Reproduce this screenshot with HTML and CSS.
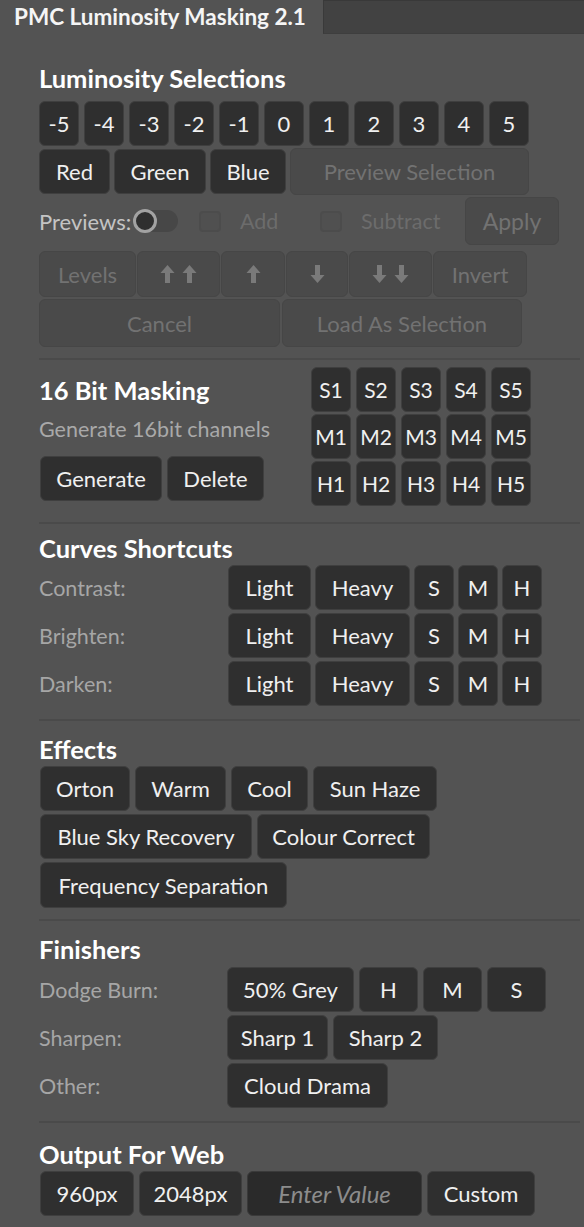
FILE: index.html
```html
<!DOCTYPE html>
<html lang="en">
<head>
<meta charset="utf-8">
<title>PMC Luminosity Masking 2.1</title>
<link rel="stylesheet" href="styles.css">
</head>
<body>
<div class="tabbar">
  <div class="tab">PMC Luminosity Masking 2.1</div>
  <div class="tab-rest"></div>
</div>
<main class="panel">
  <section class="sec sec-lum">
    <h2>Luminosity Selections</h2>
    <div class="row r1">
      <div class="btn sq">-5</div><div class="btn sq">-4</div><div class="btn sq">-3</div><div class="btn sq">-2</div><div class="btn sq">-1</div><div class="btn sq">0</div><div class="btn sq">1</div><div class="btn sq">2</div><div class="btn sq">3</div><div class="btn sq">4</div><div class="btn sq">5</div>
    </div>
    <div class="row r2">
      <div class="btn w-red">Red</div><div class="btn w-green">Green</div><div class="btn w-blue">Blue</div><div class="btn dis w-prev">Preview Selection</div>
    </div>
    <div class="row previews">
      <span class="prev-label">Previews:</span>
      <span class="toggle"><span class="knob"></span></span>
      <span class="check c-add"></span><span class="dis-text t-add">Add</span>
      <span class="check c-sub"></span><span class="dis-text t-sub">Subtract</span>
      <div class="btn dis apply">Apply</div>
    </div>
    <div class="row levels">
      <div class="btn dis">Levels</div>
      <div class="btn dis"><svg class="arr" viewBox="0 0 14 18"><path d="M7 0 L14 8 L9.5 8 L9.5 18 L4.5 18 L4.5 8 L0 8 Z"/></svg><svg class="arr" viewBox="0 0 14 18"><path d="M7 0 L14 8 L9.5 8 L9.5 18 L4.5 18 L4.5 8 L0 8 Z"/></svg></div>
      <div class="btn dis"><svg class="arr" viewBox="0 0 14 18"><path d="M7 0 L14 8 L9.5 8 L9.5 18 L4.5 18 L4.5 8 L0 8 Z"/></svg></div>
      <div class="btn dis"><svg class="arr" viewBox="0 0 14 18"><path d="M7 18 L14 10 L9.5 10 L9.5 0 L4.5 0 L4.5 10 L0 10 Z"/></svg></div>
      <div class="btn dis"><svg class="arr" viewBox="0 0 14 18"><path d="M7 18 L14 10 L9.5 10 L9.5 0 L4.5 0 L4.5 10 L0 10 Z"/></svg><svg class="arr" viewBox="0 0 14 18"><path d="M7 18 L14 10 L9.5 10 L9.5 0 L4.5 0 L4.5 10 L0 10 Z"/></svg></div>
      <div class="btn dis">Invert</div>
    </div>
    <div class="row cancel">
      <div class="btn dis">Cancel</div>
      <div class="btn dis">Load As Selection</div>
    </div>
  </section>

  <div class="divider d1"></div>

  <section class="sec sec-16">
    <div class="col16">
      <h2>16 Bit Masking</h2>
      <p class="desc">Generate 16bit channels</p>
      <div class="row gen">
        <div class="btn w-gen">Generate</div><div class="btn w-del">Delete</div>
      </div>
    </div>
    <div class="grid16">
      <div class="btn sq">S1</div><div class="btn sq">S2</div><div class="btn sq">S3</div><div class="btn sq">S4</div><div class="btn sq">S5</div>
      <div class="btn sq">M1</div><div class="btn sq">M2</div><div class="btn sq">M3</div><div class="btn sq">M4</div><div class="btn sq">M5</div>
      <div class="btn sq">H1</div><div class="btn sq">H2</div><div class="btn sq">H3</div><div class="btn sq">H4</div><div class="btn sq">H5</div>
    </div>
  </section>

  <div class="divider d2"></div>

  <section class="sec sec-curves">
    <h2>Curves Shortcuts</h2>
    <div class="lrow">
      <span class="label">Contrast:</span>
      <div class="btn w-light">Light</div><div class="btn w-heavy">Heavy</div><div class="btn sq">S</div><div class="btn sq">M</div><div class="btn sq">H</div>
    </div>
    <div class="lrow">
      <span class="label">Brighten:</span>
      <div class="btn w-light">Light</div><div class="btn w-heavy">Heavy</div><div class="btn sq">S</div><div class="btn sq">M</div><div class="btn sq">H</div>
    </div>
    <div class="lrow">
      <span class="label">Darken:</span>
      <div class="btn w-light">Light</div><div class="btn w-heavy">Heavy</div><div class="btn sq">S</div><div class="btn sq">M</div><div class="btn sq">H</div>
    </div>
  </section>

  <div class="divider d3"></div>

  <section class="sec sec-effects">
    <h2>Effects</h2>
    <div class="row erow">
      <div class="btn w-orton">Orton</div><div class="btn w-warm">Warm</div><div class="btn w-cool">Cool</div><div class="btn w-haze">Sun Haze</div>
    </div>
    <div class="row erow">
      <div class="btn w-sky">Blue Sky Recovery</div><div class="btn w-colour">Colour Correct</div>
    </div>
    <div class="row erow">
      <div class="btn w-freq">Frequency Separation</div>
    </div>
  </section>

  <div class="divider d4"></div>

  <section class="sec sec-fin">
    <h2>Finishers</h2>
    <div class="lrow">
      <span class="label fl">Dodge Burn:</span>
      <div class="btn w-grey">50% Grey</div><div class="btn w-letter">H</div><div class="btn w-letter">M</div><div class="btn w-letter">S</div>
    </div>
    <div class="lrow">
      <span class="label fl">Sharpen:</span>
      <div class="btn w-sharp1">Sharp 1</div><div class="btn w-sharp2">Sharp 2</div>
    </div>
    <div class="lrow">
      <span class="label fl">Other:</span>
      <div class="btn w-cloud">Cloud Drama</div>
    </div>
  </section>

  <div class="divider d5"></div>

  <section class="sec sec-out">
    <h2>Output For Web</h2>
    <div class="row orow">
      <div class="btn w-960">960px</div><div class="btn w-2048">2048px</div>
      <div class="input">Enter Value</div>
      <div class="btn w-custom">Custom</div>
    </div>
  </section>
</main>
</body>
</html>
```

FILE: styles.css
```css
* { box-sizing: border-box; }

html, body {
  margin: 0;
  padding: 0;
}

body {
  width: 584px;
  height: 1227px;
  overflow: hidden;
  background: #535353;
  font-family: Lato, "Open Sans", sans-serif;
  color: #f2f2f2;
}

/* Tab bar */
.tabbar {
  display: flex;
  height: 34px;
}
.tab {
  width: 323px;
  padding-left: 14px;
  font-size: 22.5px;
  font-weight: 700;
  line-height: 34px;
  color: #f5f5f5;
  background: #535353;
  white-space: nowrap;
}
.tab-rest {
  flex: 1;
  background: #424242;
  border-top: 1px solid #393939;
  border-left: 1px solid #3a3a3a;
  border-bottom: 1px solid #3e3e3e;
}

.panel {
  padding: 0 4px 0 39px;
}

.sec h2 {
  margin: 0;
  font-size: 25.5px;
  font-weight: 700;
  line-height: 28px;
  color: #ffffff;
  white-space: nowrap;
}

.divider {
  height: 2px;
  background: #4a4a4a;
}

/* Buttons */
.row {
  display: flex;
  gap: 5px;
}
.btn {
  height: 45px;
  display: flex;
  align-items: center;
  justify-content: center;
  padding: 0;
  background: #2f2f2f;
  border: 1px solid #3f3f3f;
  border-radius: 6px;
  font-size: 22px;
  color: #f0f0f0;
  white-space: nowrap;
  flex: none;
}
.btn.sq { width: 40px; }
.btn.dis {
  background: #4a4a4a;
  border-color: #464646;
  color: #727272;
}

/* Luminosity section */
.sec-lum { padding-top: 30px; }
.sec-lum h2 { margin-bottom: 9px; }
.r2 { margin-top: 3px; gap: 4px; }
.w-red { width: 71px; }
.w-green { width: 92px; }
.w-blue { width: 76px; }
.w-prev { width: 239px; height: 47px; margin-top: -1px; }

.previews {
  margin-top: 2px;
  height: 48px;
  align-items: center;
  gap: 0;
}
.prev-label {
  font-size: 22px;
  color: #c4c4c4;
  width: 94px;
  white-space: nowrap;
}
.toggle {
  width: 45px;
  height: 22px;
  border-radius: 11px;
  background: #474747;
  display: flex;
  align-items: center;
}
.knob {
  width: 24px;
  height: 24px;
  border-radius: 50%;
  border: 3px solid #a2a2a2;
  background: #2f2f2f;
}
.check {
  width: 22px;
  height: 21px;
  border: 2px solid #4c4c4c;
  border-radius: 4px;
  background: #505050;
}
.c-add { margin-left: 21px; }
.t-add { margin-left: 19px; width: 80px; }
.c-sub { margin-left: 0; }
.t-sub { margin-left: 19px; }
.dis-text {
  font-size: 21.5px;
  color: #6c6c6c;
  white-space: nowrap;
}
.apply {
  margin-left: auto;
  margin-right: 21px;
  width: 94px;
  height: 48px;
  font-size: 23px;
}

.levels {
  margin-top: 6px;
  display: grid;
  grid-template-columns: 97px 83px 64px 62px 83px 94px;
  gap: 1px;
}
.levels .btn { height: 46px; gap: 7px; }
.arr {
  width: 15px;
  height: 18px;
  fill: #7a7a7a;
}

.cancel {
  margin-top: 2px;
  display: grid;
  grid-template-columns: 241px 240px;
  gap: 2px;
}
.cancel .btn { height: 48px; }

.d1 { margin-top: 11px; }

/* 16 bit */
.sec-16 {
  display: flex;
  padding-top: 7px;
}
.col16 {
  width: 272px;
  padding-top: 9px;
}
.desc {
  margin: 13px 0 0;
  font-size: 21.5px;
  line-height: 24px;
  color: #a9a9a9;
  white-space: nowrap;
}
.gen { margin-top: 15px; padding-left: 1px; }
.w-gen { width: 122px; }
.w-del { width: 97px; }
.grid16 {
  display: grid;
  grid-template-columns: repeat(5, 40px);
  grid-auto-rows: 45px;
  column-gap: 5px;
  row-gap: 2px;
}
.grid16 .btn { font-size: 21px; }
.d2 { margin-top: 16px; }

/* Labelled rows */
.lrow {
  display: flex;
  align-items: center;
  gap: 4px;
  margin-top: 3px;
}
.label {
  width: 185px;
  font-size: 21.5px;
  color: #a6a6a6;
  white-space: nowrap;
}
.label.fl { width: 183px; }

.sec-curves { padding-top: 10px; }
.sec-curves h2 { margin-bottom: 3px; }
.w-light { width: 83px; }
.w-heavy { width: 95px; }
.d3 { margin-top: 13px; }

/* Effects */
.sec-effects { padding-top: 14px; }
.erow { margin-top: 3px; padding-left: 1px; }
.w-orton { width: 90px; }
.w-warm { width: 91px; }
.w-cool { width: 77px; }
.w-haze { width: 124px; }
.w-sky { width: 212px; }
.w-colour { width: 173px; }
.w-freq { width: 247px; height: 46px; }
.d4 { margin-top: 11px; }

/* Finishers */
.sec-fin { padding-top: 14px; }
.sec-fin h2 { margin-bottom: 4px; }
.sec-fin .lrow { gap: 5px; }
.w-grey { width: 127px; }
.w-letter { width: 59px; }
.w-sharp1 { width: 101px; }
.w-sharp2 { width: 105px; }
.w-cloud { width: 161px; }
.d5 { margin-top: 13px; }

/* Output */
.sec-out { padding-top: 17px; }
.orow { margin-top: 3px; padding-left: 1px; }
.w-960 { width: 94px; }
.w-2048 { width: 103px; }
.w-custom { width: 108px; }
.input {
  width: 175px;
  height: 45px;
  display: flex;
  align-items: center;
  justify-content: center;
  background: #2a2a2a;
  border: 1px solid #3a3a3a;
  border-radius: 6px;
  font-size: 24px;
  font-style: italic;
  color: #8c8c8c;
  white-space: nowrap;
}
```
